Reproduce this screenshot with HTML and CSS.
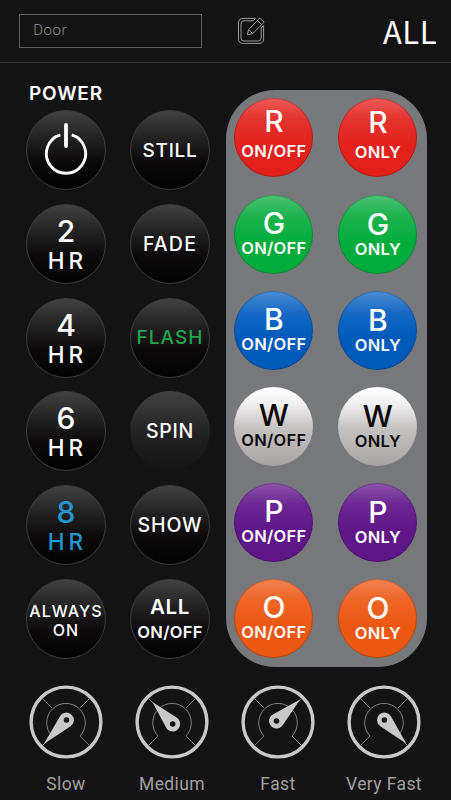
FILE: index.html
```html
<!DOCTYPE html>
<html lang="en">
<head>
    <meta charset="UTF-8">
    <meta name="viewport" content="width=device-width, initial-scale=1.0">
    <title>Light Remote</title>
    <link rel="stylesheet" href="styles.css">
</head>
<body>
    <header class="topbar">
        <div class="name-field">Door</div>
        <svg class="edit-icon" viewBox="0 0 28 28">
            <path d="M18.5 2.4H6.2Q1.5 2.4 1.5 7V22.8Q1.5 27.4 6.2 27.4H22Q26.6 27.4 26.6 22.8V9.5L24.2 12V22Q24.2 25 21.2 25H7Q4 25 4 22V7.8Q4 4.8 7 4.8H16.2Z"/>
            <path d="M10.3 18.7L11.6 13.6L22.8 2L27.2 6.2L15.6 17.6ZM20.4 4.5L24.8 8.6M11.6 13.6L15.6 17.6"/>
        </svg>
        <div class="group-name">ALL</div>
    </header>

    <main class="remote">
        <section class="modes">
            <h2 class="power-label">POWER</h2>
            <div class="mode-grid">
                <button class="btn">
                    <svg class="power-icon" viewBox="0 0 44 54">
                        <path class="ring" d="M16.3 12.9A19.6 19.6 0 1 0 27.7 12.9"/>
                        <path class="bar" d="M22 3V24"/>
                    </svg>
                </button>
                <button class="btn word still">STILL</button>
                <button class="btn hours"><span class="num">2</span><span class="hr">HR</span></button>
                <button class="btn word fade">FADE</button>
                <button class="btn hours"><span class="num">4</span><span class="hr">HR</span></button>
                <button class="btn word flash">FLASH</button>
                <button class="btn hours"><span class="num">6</span><span class="hr">HR</span></button>
                <button class="btn word spin">SPIN</button>
                <button class="btn hours active"><span class="num">8</span><span class="hr">HR</span></button>
                <button class="btn word show">SHOW</button>
                <button class="btn always"><span class="wide">ALWAYS</span><span>ON</span></button>
                <button class="btn all"><span class="big">ALL</span><span class="onoff">ON/OFF</span></button>
            </div>
        </section>

        <section class="colors">
            <button class="color red high"><span class="letter">R</span><span class="onoff">ON/OFF</span></button>
            <button class="color red high only"><span class="letter">R</span><span class="sub">ONLY</span></button>
            <button class="color green"><span class="letter">G</span><span class="onoff">ON/OFF</span></button>
            <button class="color green only"><span class="letter">G</span><span class="sub">ONLY</span></button>
            <button class="color blue"><span class="letter">B</span><span class="onoff">ON/OFF</span></button>
            <button class="color blue only"><span class="letter">B</span><span class="sub">ONLY</span></button>
            <button class="color white"><span class="letter">W</span><span class="onoff">ON/OFF</span></button>
            <button class="color white only"><span class="letter">W</span><span class="sub">ONLY</span></button>
            <button class="color purple"><span class="letter">P</span><span class="onoff">ON/OFF</span></button>
            <button class="color purple only"><span class="letter">P</span><span class="sub">ONLY</span></button>
            <button class="color orange"><span class="letter">O</span><span class="onoff">ON/OFF</span></button>
            <button class="color orange only"><span class="letter">O</span><span class="sub">ONLY</span></button>
        </section>
    </main>

    <footer class="speeds">
        <div class="speed">
            <svg class="gauge" viewBox="-37 -37 74 74">
                <circle class="rim" r="34.9"/>
                <path class="dial" d="M-23.5 23.5L-14 14A19.3 19.3 0 1 1 14 14L23.5 23.5M-23.5 -23.5L-14 -14M23.5 -23.5L14 -14"/>
                <path class="needle" transform="translate(0.5 -2) rotate(223.5)" d="M0 -33L7.2 -2.2A7.5 7.5 0 1 1 -7.2 -2.2Z"/>
                <circle class="hub" cx="0.5" cy="-2" r="2.8"/>
            </svg>
            <span>Slow</span>
        </div>
        <div class="speed">
            <svg class="gauge" viewBox="-37 -37 74 74">
                <circle class="rim" r="34.9"/>
                <path class="dial" d="M-23.5 23.5L-14 14A19.3 19.3 0 1 1 14 14L23.5 23.5M-23.5 -23.5L-14 -14M23.5 -23.5L14 -14"/>
                <path class="needle" transform="translate(0.7 2) rotate(-42.5)" d="M0 -30L7.2 -2.2A7.5 7.5 0 1 1 -7.2 -2.2Z"/>
                <circle class="hub" cx="0.7" cy="2" r="2.8"/>
            </svg>
            <span>Medium</span>
        </div>
        <div class="speed">
            <svg class="gauge" viewBox="-37 -37 74 74">
                <circle class="rim" r="34.9"/>
                <path class="dial" d="M-23.5 23.5L-14 14A19.3 19.3 0 1 1 14 14L23.5 23.5M-23.5 -23.5L-14 -14M23.5 -23.5L14 -14"/>
                <path class="needle" transform="translate(-1.5 -1) rotate(47.5)" d="M0 -32L7.2 -2.2A7.5 7.5 0 1 1 -7.2 -2.2Z"/>
                <circle class="hub" cx="-1.5" cy="-1" r="2.8"/>
            </svg>
            <span>Fast</span>
        </div>
        <div class="speed">
            <svg class="gauge" viewBox="-37 -37 74 74">
                <circle class="rim" r="34.9"/>
                <path class="dial" d="M-23.5 23.5L-14 14A19.3 19.3 0 1 1 14 14L23.5 23.5M-23.5 -23.5L-14 -14M23.5 -23.5L14 -14"/>
                <path class="needle" transform="translate(0.4 -2) rotate(137)" d="M0 -32L7.2 -2.2A7.5 7.5 0 1 1 -7.2 -2.2Z"/>
                <circle class="hub" cx="0.4" cy="-2" r="2.8"/>
            </svg>
            <span>Very Fast</span>
        </div>
    </footer>
</body>
</html>
```
FILE: styles.css
```css
* {
    box-sizing: border-box;
}

body {
    margin: 0;
    width: 451px;
    height: 800px;
    overflow: hidden;
    background: #131313;
    color: #fff;
    font-family: 'Inter', sans-serif;
}

/* Header */
.topbar {
    display: flex;
    align-items: flex-start;
    height: 63px;
    padding: 12px 14px 0 19px;
    border-bottom: 1px solid #352e2e;
}

.name-field {
    width: 183px;
    height: 34px;
    margin-top: 2px;
    padding-left: 13px;
    border: 1px solid #5c5f5c;
    color: #8a8a8a;
    font-family: 'Noto Sans CJK SC', sans-serif;
    font-size: 15px;
    font-weight: 300;
    line-height: 28px;
    letter-spacing: 0.1px;
}

.edit-icon {
    width: 28px;
    height: 28px;
    margin: 4px 0 0 35px;
    fill: none;
    stroke: #999;
    stroke-width: 1;
}

.group-name {
    margin-left: auto;
    font-family: 'Noto Sans CJK SC', sans-serif;
    font-size: 31px;
    line-height: 38px;
    letter-spacing: 0.5px;
}

/* Buttons */
.remote {
    display: flex;
    height: 604px;
}

.modes {
    width: 226px;
    padding: 20px 0 0 26px;
}

.power-label {
    margin: 1px 0 6px 3px;
    font-size: 19px;
    font-weight: 600;
    line-height: 20px;
    letter-spacing: 0.8px;
}

.mode-grid {
    display: grid;
    grid-template-columns: 80px 80px;
    grid-auto-rows: 80px;
    gap: 13.8px 24px;
}

.btn,
.color {
    display: flex;
    flex-direction: column;
    align-items: center;
    margin: 0;
    padding: 0;
    border-radius: 50%;
    color: #fff;
    font-family: inherit;
    white-space: nowrap;
}

.btn {
    border: 1px solid #3c3c3c;
    background: linear-gradient(#434344 0%, #252425 32%, #0b0909 65%, #020202 100%) border-box;
}

.power-icon {
    width: 44px;
    height: 54px;
    margin-top: 11px;
    fill: none;
    stroke: #fff;
}

.power-icon .ring {
    stroke-width: 2.9;
}

.power-icon .bar {
    stroke-width: 3.8;
    stroke-linecap: round;
}

.word {
    justify-content: center;
    font-size: 19px;
    font-weight: 500;
}

.still {
    letter-spacing: 0.7px;
}

.fade {
    font-size: 19.5px;
    letter-spacing: 1.2px;
}

.flash {
    color: #25a34d;
    letter-spacing: 1.1px;
}

.spin {
    border-color: transparent;
    background: linear-gradient(#424243, #242324 50%, #151414) border-box;
    font-size: 19.5px;
    letter-spacing: 0.7px;
}

.show {
    font-size: 19.5px;
    letter-spacing: 0.9px;
}

.hours {
    padding-top: 11px;
}

.hours .num {
    font-size: 30px;
    font-weight: 500;
    line-height: 30px;
}

.hours .hr {
    padding-left: 3px;
    font-size: 22.5px;
    font-weight: 500;
    line-height: 30px;
    letter-spacing: 4px;
}

.active {
    color: #2196d3;
}

.always {
    padding-top: 22px;
    font-size: 16px;
    font-weight: 500;
    line-height: 19px;
}

.always span {
    letter-spacing: 1.1px;
}

.all {
    padding-top: 14px;
}

.all .big {
    font-size: 20.5px;
    font-weight: 600;
    line-height: 26px;
    letter-spacing: 0.7px;
}

.onoff,
.sub {
    font-size: 16.5px;
    font-weight: 600;
    line-height: 24px;
    letter-spacing: 0.3px;
}

/* Color panel */
.colors {
    display: grid;
    grid-template-columns: 79px 79px;
    grid-auto-rows: 79px;
    gap: 17.2px 25px;
    width: 200.5px;
    height: 577px;
    margin-top: 27px;
    padding: 8.4px 0 0 8.4px;
    border-radius: 49px;
    background: #77787b;
}

.color {
    padding-top: 12px;
    border: 1px solid rgba(0, 0, 0, 0.2);
}

.letter {
    font-size: 30px;
    font-weight: 500;
    line-height: 30px;
}

.color .onoff,
.color .sub {
    line-height: 21px;
}

.only {
    padding-top: 13px;
}

.high {
    padding-top: 7px;
}

.high.only {
    padding-top: 8px;
}

.high .letter {
    margin-bottom: 5px;
}

.red {
    background: linear-gradient(#ee5a56 0%, #e4322e 28%, #e2211c 60%) border-box;
}

.green {
    background: linear-gradient(#4cc274 0%, #1bb24e 28%, #02ad3e 60%) border-box;
}

.blue {
    background: linear-gradient(#4a8ed4 0%, #1668c4 28%, #005aba 60%) border-box;
}

.white {
    border-color: transparent;
    background: linear-gradient(#ffffff 0%, #f0efef 22%, #c5c2c2 52%, #a9a4a4 100%) border-box;
    color: #0b0706;
}

.purple {
    background: linear-gradient(#8d57aa 0%, #6b2593 28%, #5f1787 60%) border-box;
}

.orange {
    background: linear-gradient(#f4814f 0%, #ee6426 28%, #eb5812 60%) border-box;
}

/* Speed gauges */
.speeds {
    display: grid;
    grid-template-columns: repeat(4, 106px);
    padding: 18px 0 0 13px;
}

.speed {
    display: flex;
    flex-direction: column;
    align-items: center;
    color: #a0a0a0;
    font-family: Roboto, sans-serif;
    font-size: 17.5px;
    line-height: 20px;
    letter-spacing: 0.4px;
}

.gauge {
    width: 74px;
    height: 74px;
    margin-bottom: 15px;
}

.rim {
    fill: none;
    stroke: #c9c9c9;
    stroke-width: 3.4;
}

.dial {
    fill: none;
    stroke: #9a9a9a;
    stroke-width: 0.8;
}

.needle {
    fill: #c9c9c9;
}

.hub {
    fill: #131313;
}
```
